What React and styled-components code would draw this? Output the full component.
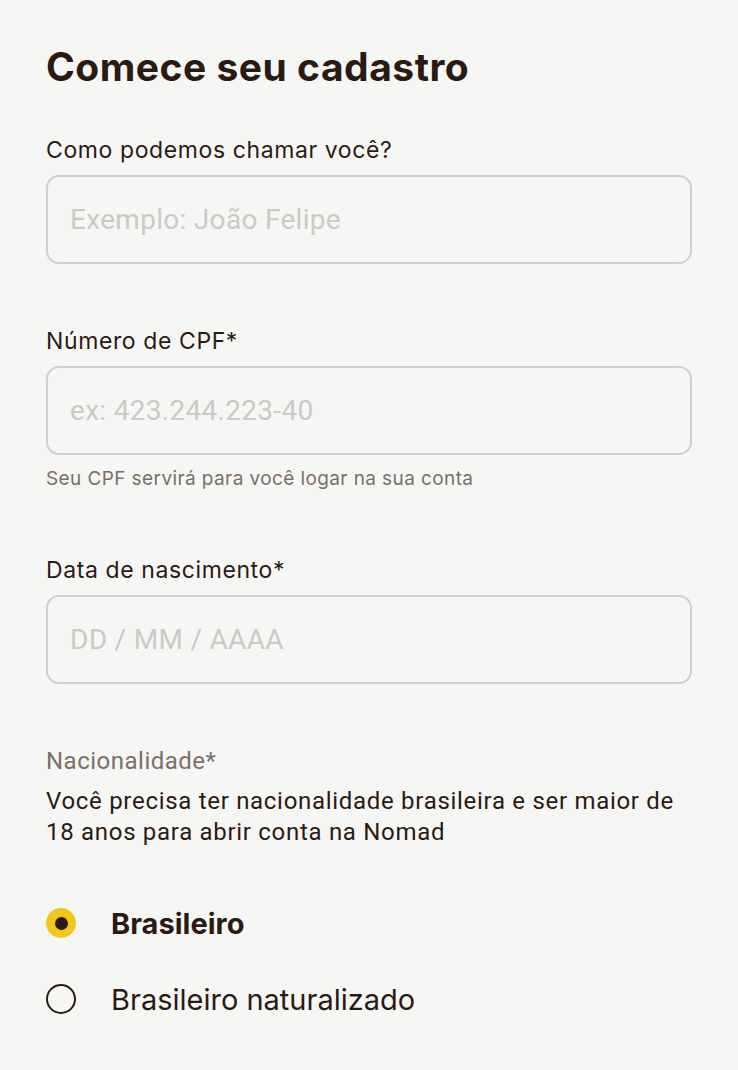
import React from "react";
import styled, { createGlobalStyle } from "styled-components";

const Global = createGlobalStyle`
  html, body { margin: 0; padding: 0; background: #f6f7f5; }
  * { box-sizing: border-box; }
`;

const Page = styled.div`
  padding: 38px 46px 0 46px;
  font-family: "Inter", "Noto Sans", sans-serif;
  color: #2b1a12;
  min-height: 1070px;
  background: #f6f7f5;
`;

const Title = styled.h1`
  margin: 0;
  font-size: 39px;
  font-weight: 700;
  line-height: 58px;
  letter-spacing: 0.5px;
`;

const Field = styled.div`
  display: flex;
  flex-direction: column;
  margin-top: ${(p) => p.$top}px;
`;

const Label = styled.label`
  line-height: 30px;
  letter-spacing: ${(p) => (p.$roboto ? "0.5px" : "0.6px")};
  color: ${(p) => (p.$muted ? "#7b6f66" : "#2b1a12")};
  font-family: ${(p) => (p.$roboto ? "Roboto, sans-serif" : "inherit")};
  font-size: ${(p) => (p.$roboto ? "24px" : "23px")};
`;

const Input = styled.input`
  margin-top: 10px;
  width: 100%;
  height: 89px;
  border: 2px solid #cfcfcc;
  border-radius: 13px;
  background: transparent;
  padding: 0 22px;
  font-family: Roboto, sans-serif;
  font-size: 28px;
  letter-spacing: 0.3px;
  color: #2b1a12;
  outline: none;
  &::placeholder { color: #cacac6; }
`;

const Helper = styled.div`
  margin-top: 12px;
  font-size: 19px;
  line-height: 24px;
  letter-spacing: 0.4px;
  color: #7b6f66;
`;

const Description = styled.p`
  margin: 10px 0 0;
  font-family: Roboto, sans-serif;
  font-size: 24px;
  line-height: 31px;
  letter-spacing: 0.7px;
  color: #2b1a12;
`;

const RadioList = styled.div`
  display: flex;
  flex-direction: column;
  gap: 46px;
  margin-top: 60px;
`;

const RadioRow = styled.div`
  display: flex;
  align-items: center;
  gap: 35px;
  height: 30px;
`;

const Radio = styled.span`
  width: 30px;
  height: 30px;
  border-radius: 50%;
  flex-shrink: 0;
  display: flex;
  align-items: center;
  justify-content: center;
  background: ${(p) => (p.$checked ? "#f4c51a" : "transparent")};
  border: ${(p) => (p.$checked ? "none" : "2px solid #2b1a12")};
  &::after {
    content: "";
    display: ${(p) => (p.$checked ? "block" : "none")};
    width: 13px;
    height: 13px;
    border-radius: 50%;
    background: #2b1a12;
  }
`;

const RadioText = styled.span`
  font-size: 29px;
  letter-spacing: 0;
  font-weight: ${(p) => (p.$bold ? 700 : 400)};
  color: #2b1a12;
`;

export default function App() {
  return (
    <>
      <Global />
      <Page>
        <Title>Comece seu cadastro</Title>
        <Field $top={39}>
          <Label>Como podemos chamar você?</Label>
          <Input placeholder="Exemplo: João Felipe" />
        </Field>
        <Field $top={62}>
          <Label>Número de CPF*</Label>
          <Input placeholder="ex: 423.244.223-40" />
          <Helper>Seu CPF servirá para você logar na sua conta</Helper>
        </Field>
        <Field $top={64}>
          <Label>Data de nascimento*</Label>
          <Input placeholder="DD / MM / AAAA" />
        </Field>
        <Field $top={62}>
          <Label $muted $roboto>Nacionalidade*</Label>
          <Description>
            Você precisa ter nacionalidade brasileira e ser maior de 18 anos para abrir conta na Nomad
          </Description>
        </Field>
        <RadioList>
          <RadioRow>
            <Radio $checked />
            <RadioText $bold>Brasileiro</RadioText>
          </RadioRow>
          <RadioRow>
            <Radio />
            <RadioText>Brasileiro naturalizado</RadioText>
          </RadioRow>
        </RadioList>
      </Page>
    </>
  );
}
